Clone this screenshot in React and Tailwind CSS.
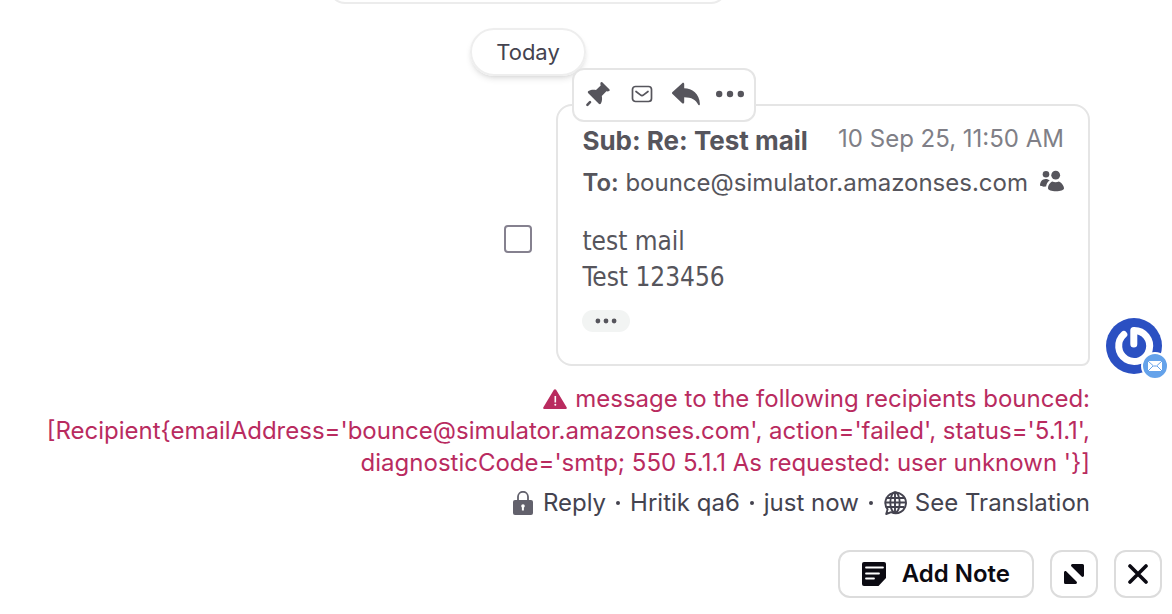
import React, { useState } from 'react';

const PinIcon = () => (
  <svg width="26" height="26" viewBox="0 0 26 26" fill="currentColor" aria-hidden="true">
    <path d="M15.600 1.600c.5-.8 1.300-.8 1.900-.2l6.800 6.800c.7.700.5 1.500-.2 1.900-1 .5-1.900.3-2.700.2l-4.600 4.700c.5 2.400.4 5.200-.9 7.500-.5.900-1.400 1-2.100.3L3.300 12.200c-.7-.7-.7-1.500.2-2.100 2.200-1.300 5-1.500 7.500-1l4.700-4.600c-.3-1-.5-2-.1-2.900z" />
    <path d="M2.400 23.800l2.600-2.600" stroke="currentColor" strokeWidth="2.600" strokeLinecap="round" />
  </svg>
);

const MailIcon = () => (
  <svg width="22" height="18" viewBox="0 0 22 18" fill="none" stroke="currentColor" strokeWidth="1.700" strokeLinecap="round" strokeLinejoin="round" aria-hidden="true">
    <rect x="1.500" y="1.500" width="19" height="15" rx="3" />
    <path d="M5 6.500l4.400 3.400c1 .8 2.200.8 3.200 0L17 6.500" />
  </svg>
);

const ReplyIcon = () => (
  <svg width="30" height="26" viewBox="0 0 30 26" className="shrink-0" fill="currentColor" aria-hidden="true">
    <path d="M1.500 11.100L11.200 2.200c.8-.8 2-.3 2 .8v4.200C21 7.400 28.600 12.500 28.900 23c0 1.400-1.300 1.700-1.800.6-2-4.700-6.500-7.200-13.900-7.300v5c0 1.100-1.100 1.700-2 .9l-9.700-9.100c-.7-.7-.7-1.400 0-2z" />
  </svg>
);

const DotsIcon = ({ className }) => (
  <svg className={className} viewBox="0 0 28 8" fill="currentColor" aria-hidden="true">
    <circle cx="3.200" cy="4" r="3.200" />
    <circle cx="14" cy="4" r="3.200" />
    <circle cx="24.800" cy="4" r="3.200" />
  </svg>
);

const PeopleIcon = () => (
  <svg width="24" height="22" viewBox="1 0 24 22" fill="currentColor" aria-hidden="true">
    <circle cx="7" cy="4.200" r="3.300" />
    <circle cx="16.700" cy="5.200" r="4.400" />
    <path d="M1 15.500c0-3.700 2.300-6.500 5.700-6.500 1.700 0 3.100.6 4 1.500-2.100 1.300-3.300 3.400-3.600 6-2.200.3-4.600.3-6.100-1z" />
    <path d="M9 18.300c0-3.800 2.800-6.300 4.300-6.900 2 1.100 4.600 1.100 6.600 0 2.300 1 5.100 4 5.100 6.900 0 1.800-3.600 3-8 3s-8-1.200-8-3z" />
  </svg>
);

const WarningIcon = () => (
  <svg className="mr-2 inline-block align-[-2px]" width="24" height="20" viewBox="0 0 24 20" aria-hidden="true">
    <path d="M10.900.8c.5-.9 1.700-.9 2.200 0l10.500 17.400c.5.900 0 1.800-1.100 1.800h-21c-1.100 0-1.600-.9-1.100-1.800z" fill="#b92b5f" />
    <path d="M12.300 7v6.500" stroke="#fff" strokeWidth="1.600" />
    <circle cx="12.300" cy="15.800" r="1" fill="#fff" />
  </svg>
);

const LockIcon = () => (
  <svg width="20" height="24" viewBox="0 0 20 24" aria-hidden="true">
    <path d="M5 11V5.800a4.800 4.800 0 0110 0V11" fill="none" stroke="#62616c" strokeWidth="1.800" />
    <rect x="0" y="9" width="20" height="15" rx="2" fill="#62616c" />
    <circle cx="10" cy="15" r="1.800" fill="#fff" />
    <path d="M9.900 15v4.500" stroke="#fff" strokeWidth="2" />
  </svg>
);

const GlobeIcon = () => (
  <svg width="24" height="24" viewBox="0 0 24 24" fill="none" stroke="currentColor" strokeWidth="1.900" aria-hidden="true">
    <path d="M4.600 18.300L3.200 23l5-1.800A10.300 10.300 0 104.600 18.300z" strokeLinejoin="round" />
    <ellipse cx="12" cy="11.500" rx="4.700" ry="10.200" />
    <path d="M12 1.500v20M2.800 7h18.400M1.800 11.500h20.400M2.800 16h18.400" />
  </svg>
);

const NoteIcon = () => (
  <svg width="24" height="24" viewBox="0 0 24 24" aria-hidden="true">
    <path d="M2 0h20a2 2 0 012 2v14l-7.500 8H2a2 2 0 01-2-2V2a2 2 0 012-2z" fill="currentColor" />
    <path d="M4 5.500h17M4 11.500h13M4 16.500h8" stroke="#fff" strokeWidth="1.800" strokeLinecap="round" />
  </svg>
);

const ExpandIcon = () => (
  <svg width="20" height="20" viewBox="0 0 20 20" fill="currentColor" aria-hidden="true">
    <path d="M8.500 0h10A1.500 1.500 0 0120 1.500v10c0 1.300-1.500 1.900-2.400 1L7.500 2.500C6.500 1.500 7.200 0 8.500 0z" />
    <path d="M0 8.500c0-1.300 1.500-2 2.400-1l10.100 10c1 1 .3 2.500-1 2.500h-10A1.500 1.500 0 010 18.500z" />
  </svg>
);

const CloseIcon = () => (
  <svg width="20" height="20" viewBox="0 0 20 20" fill="none" stroke="currentColor" strokeWidth="3.600" strokeLinecap="round" aria-hidden="true">
    <path d="M2 2l16 16M18 2L2 18" />
  </svg>
);

const Avatar = () => (
  <div className="relative size-14 shrink-0">
    <svg className="size-14" viewBox="0 0 56 56" aria-hidden="true">
      <circle cx="28" cy="28" r="28" fill="#2b50c2" />
      <path d="M27.800 26V12.500A15.500 15.500 0 1117.800 16.500" fill="none" stroke="#fff" strokeWidth="7" strokeLinecap="round" strokeLinejoin="round" />
    </svg>
    <svg className="absolute -right-[7px] -bottom-1.5 size-7" viewBox="0 0 28 28" aria-hidden="true">
      <circle cx="14" cy="14" r="13" fill="#64a2ea" stroke="#fff" strokeWidth="2" />
      <rect x="7" y="9" width="14" height="10" fill="#fff" />
      <path d="M7 9l5.500 5h3L21 9M7 19l5-5M21 19l-5-5" fill="none" stroke="#64a2ea" strokeWidth="1" />
    </svg>
  </div>
);

const EmailMessage = () => {
  const [selected, setSelected] = useState(false);

  return (
    <div className="flex justify-end gap-4">
      <label className="mt-[121px] mr-2 h-7">
        <input
          type="checkbox"
          aria-label="Select message"
          checked={selected}
          onChange={(e) => setSelected(e.target.checked)}
          className="block size-7 appearance-none rounded-sm border-2 border-[#85818f] bg-white checked:bg-[#85818f]"
        />
      </label>

      <article className="relative rounded-2xl rounded-br-lg border-2 border-[#e5e5e5] bg-white px-6 pt-[15px] pb-8 text-[#56555c]">
        {/* Hover actions */}
        <div className="absolute -top-[38px] left-3.5 z-10 flex h-[54px] items-center gap-4 rounded-xl border-2 border-[#e5e5e5] bg-white px-2.5 pb-0.5">
          <button aria-label="Pin" className="flex w-7 justify-center"><PinIcon /></button>
          <button aria-label="Mark as unread" className="flex w-7 justify-center"><MailIcon /></button>
          <button aria-label="Reply" className="flex w-7 justify-center"><ReplyIcon /></button>
          <button aria-label="More actions" className="flex w-7 justify-center"><DotsIcon className="h-2 w-7" /></button>
        </div>

        <header className="flex items-center justify-between gap-5">
          <h2 className="text-[26px] leading-10 font-bold">Sub: Re: Test mail</h2>
          <time className="pb-1 text-2xl leading-8 text-[#807f87]">10 Sep 25, 11:50 AM</time>
        </header>
        <div className="flex items-center justify-between gap-3 pt-0.5">
          <p className="text-2xl leading-10">
            <span className="font-semibold">To:</span> bounce@simulator.amazonses.com
          </p>
          <div className="pb-1"><PeopleIcon /></div>
        </div>

        <div className="mt-5 font-['DejaVu_Sans_Condensed','DejaVu_Sans',sans-serif] text-[26px] leading-9">
          <p>test mail</p>
          <p>Test 123456</p>
        </div>
        <button aria-label="Show quoted text" className="mt-[15px] flex h-[22px] w-12 items-center justify-center rounded-full bg-[#f2f4f3]">
          <DotsIcon className="h-1.5 w-6" />
        </button>
      </article>

      <div className="-mb-2 flex items-end">
        <Avatar />
      </div>
    </div>
  );
};

export default function App() {
  return (
    <div className="min-h-screen w-full overflow-hidden bg-white pr-2.5 font-['Inter',sans-serif] text-[#44434f]">
      <div className="flex flex-col items-center pr-[106px]">
        {/* Tail end of the previous message */}
        <div className="-mt-7 h-8 w-[398px] rounded-2xl border-2 border-[#ececec]" />
        <div className="mt-6 flex h-12 items-center rounded-full border-2 border-[#eeeeee] px-6 text-[22px] shadow-md">
          Today
        </div>
      </div>

      <main className="mt-7">
        <EmailMessage />

        <div className="mr-[72px] pt-[17px] pl-10 text-right text-2xl">
          <p className="leading-8 text-[#b92b5f]">
            <WarningIcon />
            message to the following recipients bounced:
            <br />
            [Recipient&#123;emailAddress='bounce@simulator.amazonses.com', action='failed', status='5.1.1',
            diagnosticCode='smtp; 550 5.1.1 As requested: user unknown '&#125;]
          </p>
          <div className="mt-2 flex items-center justify-end gap-2.5 leading-8">
            <LockIcon />
            <span>Reply</span>
            <span className="size-1 rounded-full bg-current" />
            <span>Hritik qa6</span>
            <span className="size-1 rounded-full bg-current" />
            <span>just now</span>
            <span className="size-1 rounded-full bg-current" />
            <button className="flex items-center gap-2">
              <GlobeIcon />
              See Translation
            </button>
          </div>
        </div>
      </main>

      <footer className="mt-[31px] flex justify-end gap-4 text-[#0b0a12]">
        <button className="flex h-12 items-center gap-4 rounded-xl border-2 border-[#dcdcdc] px-[22px] text-2xl font-semibold">
          <NoteIcon />
          Add Note
        </button>
        <button aria-label="Expand" className="flex size-12 items-center justify-center rounded-xl border-2 border-[#dcdcdc]">
          <ExpandIcon />
        </button>
        <button aria-label="Close" className="flex size-12 items-center justify-center rounded-xl border-2 border-[#dcdcdc]">
          <CloseIcon />
        </button>
      </footer>
    </div>
  );
}
